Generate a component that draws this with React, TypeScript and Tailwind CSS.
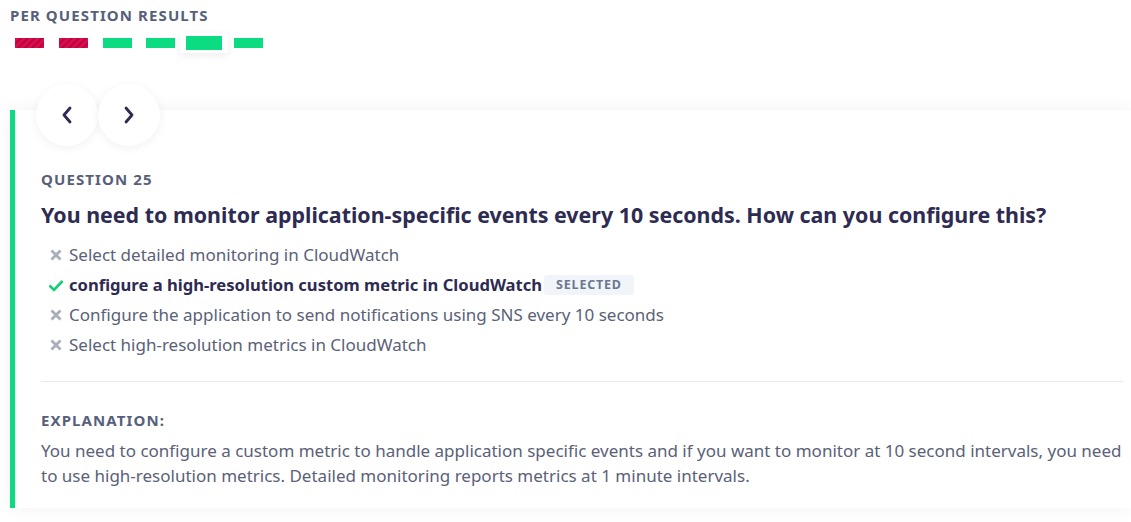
const options = [
  { text: "Select detailed monitoring in CloudWatch", correct: false, selected: false },
  { text: "configure a high-resolution custom metric in CloudWatch", correct: true, selected: true },
  { text: "Configure the application to send notifications using SNS every 10 seconds", correct: false, selected: false },
  { text: "Select high-resolution metrics in CloudWatch", correct: false, selected: false },
];

const results = ["wrong", "wrong", "right", "right", "current", "right"];

function Cross() {
  return (
    <svg width="12" height="12" viewBox="0 0 12 12" className="shrink-0">
      <path d="M1.5 1.5 L10.5 10.5 M10.5 1.5 L1.5 10.5" stroke="#a9adb9" strokeWidth="2.8" strokeLinecap="butt" />
    </svg>
  );
}

function Check() {
  return (
    <svg width="16" height="13" viewBox="0 0 16 13" className="shrink-0">
      <path d="M1.5 6.5 L6 11 L14.5 2" stroke="#12cf78" strokeWidth="2.6" fill="none" />
    </svg>
  );
}

export default function App() {
  return (
    <div className="min-h-screen bg-white pb-4 font-['Noto_Sans',sans-serif]">
      <div className="px-[10px] pt-[5px]">
        <h2 className="text-[15px] leading-[20px] font-bold tracking-[1.1px] text-[#57607a]">PER QUESTION RESULTS</h2>
        <div className="mt-[8px] flex items-center pl-[5px] h-[20px]">
          {results.map((r, i) =>
            r === "current" ? (
              <div key={i} className="mr-[6px] -ml-[9px] bg-white px-[6px] py-[3px] shadow-[0_2px_8px_rgba(0,0,0,0.08)]">
                <div className="h-[14px] w-[36px] bg-[#0bdc82]" />
              </div>
            ) : (
              <div
                key={i}
                className={
                  r === "wrong"
                    ? "mr-[15px] h-[10px] w-[29px] bg-[repeating-linear-gradient(135deg,#dd0b4e_0px,#dd0b4e_3px,#b8063f_3px,#b8063f_5px)]"
                    : "mr-[14px] h-[10px] w-[29px] bg-[#0bdc82]"
                }
              />
            )
          )}
        </div>
      </div>

      <div className="mt-[31px] ml-[10px]">
        <div className="relative z-10 ml-[26px] -mb-[36px] flex">
          <button className="flex h-[62px] w-[62px] items-center justify-center rounded-full bg-white shadow-[0_2px_10px_rgba(0,0,0,0.06)]">
            <svg width="14" height="18" viewBox="0 0 14 18">
              <path d="M10 2 L4 9 L10 16" stroke="#2d2a55" strokeWidth="2.8" fill="none" strokeLinejoin="round" strokeLinecap="round" />
            </svg>
          </button>
          <button className="flex h-[62px] w-[62px] items-center justify-center rounded-full bg-white shadow-[0_2px_10px_rgba(0,0,0,0.06)]">
            <svg width="14" height="18" viewBox="0 0 14 18">
              <path d="M4 2 L10 9 L4 16" stroke="#2d2a55" strokeWidth="2.8" fill="none" strokeLinejoin="round" strokeLinecap="round" />
            </svg>
          </button>
        </div>

        <div className="border-l-[5px] border-[#0bdc82] bg-white pl-[26px] pr-[8px] pt-[59px] pb-[20px] shadow-[0_0_18px_rgba(0,0,0,0.06)]">
          <div className="text-[15px] leading-[20px] font-bold tracking-[1.1px] text-[#57607a]">QUESTION 25</div>
          <h1 className="mt-[12px] text-[21.4px] leading-[28px] font-bold text-[#2e2b53]">
            You need to monitor application-specific events every 10 seconds. How can you configure this?
          </h1>
          <ul className="mt-[11px] flex flex-col">
            {options.map((o, i) => (
              <li key={i} className="flex h-[30px] items-center">
                <span className="flex w-[28px] justify-center pl-[2px]">{o.correct ? <Check /> : <Cross />}</span>
                <span
                  className={
                    o.correct
                      ? "text-[16.6px] font-bold text-[#2e2b53]"
                      : "text-[17px] text-[#5a6178]"
                  }
                >
                  {o.text}
                </span>
                {o.selected && (
                  <span className="ml-[2px] rounded-[3px] bg-[#f1f5f9] px-[12px] py-[2px] text-[12.5px] leading-[16px] font-bold tracking-[0.8px] text-[#6b7891]">
                    SELECTED
                  </span>
                )}
              </li>
            ))}
          </ul>
          <div className="mt-[21px] border-t border-[#e8e9ec]" />
          <div className="mt-[28px] text-[15px] leading-[20px] font-bold tracking-[1.1px] text-[#57607a]">EXPLANATION:</div>
          <p className="mt-[8px] text-[17px] leading-[25px] text-[#5a6178]">
            You need to configure a custom metric to handle application specific events and if you want to monitor at 10 second intervals, you need to use high-resolution metrics. Detailed monitoring reports metrics at 1 minute intervals.
          </p>
        </div>
      </div>
    </div>
  );
}
